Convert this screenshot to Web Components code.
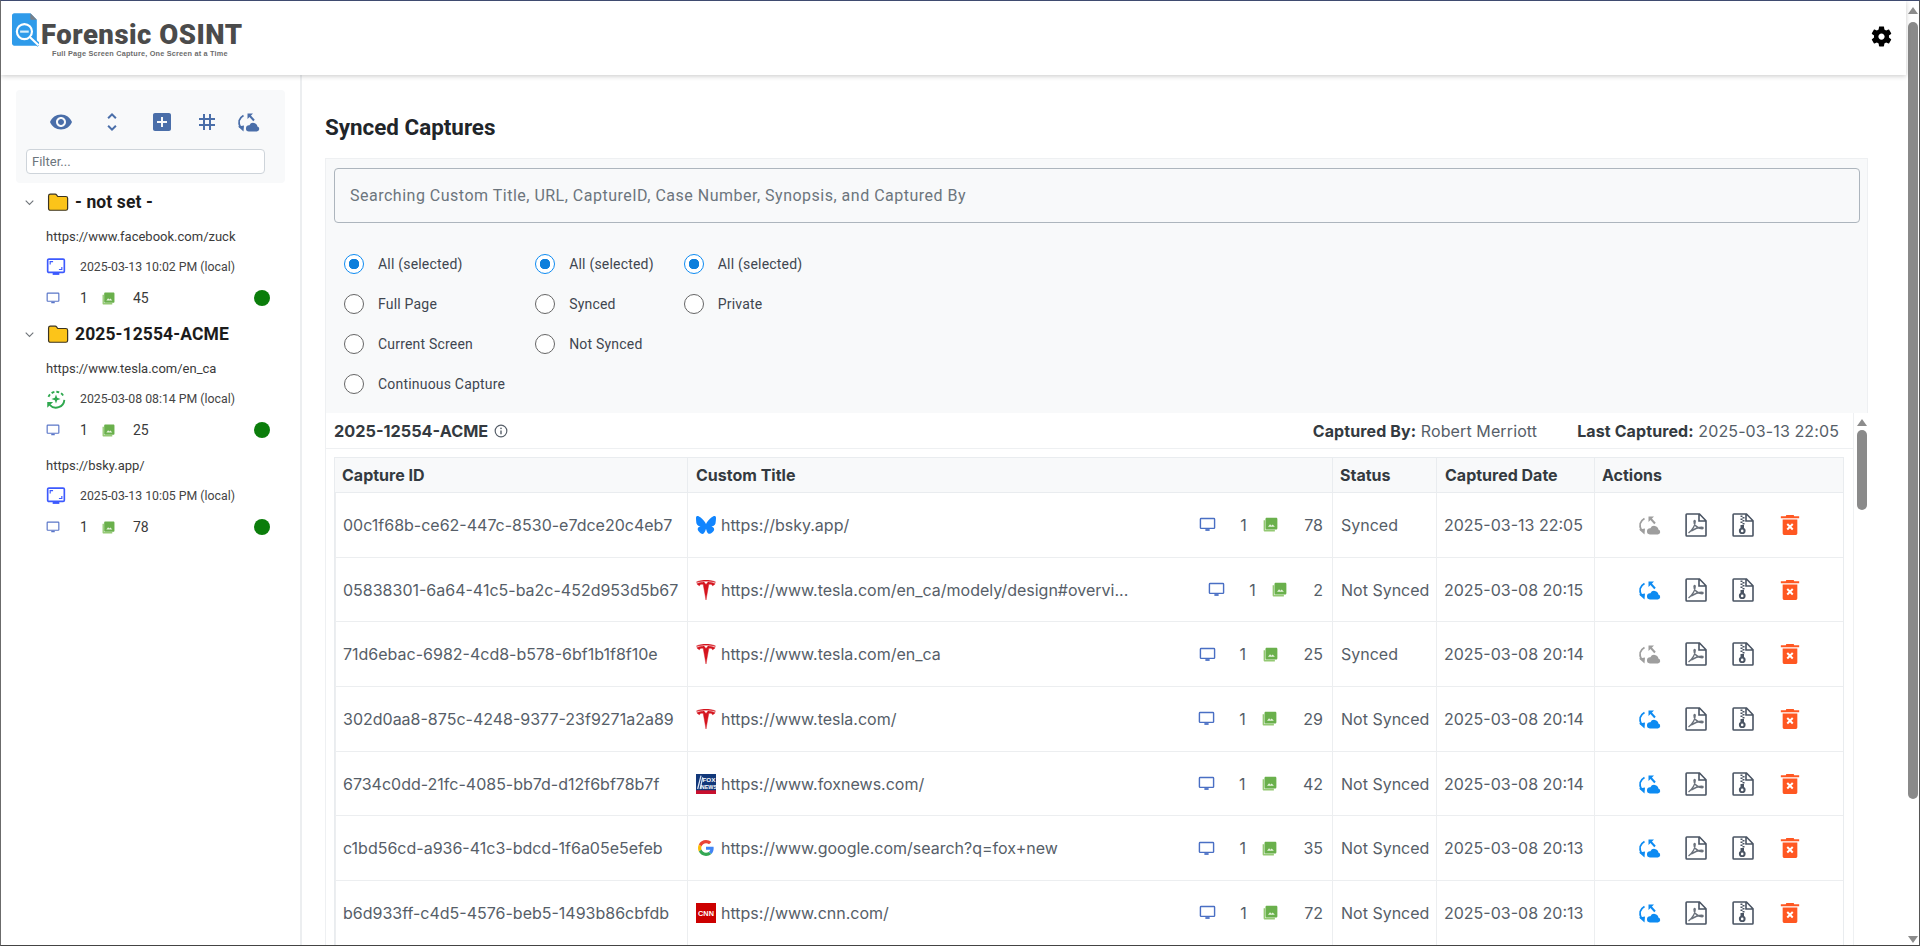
<!DOCTYPE html>
<html lang="en">
<head>
<meta charset="utf-8">
<title>Forensic OSINT</title>
<style>
    html, body { margin: 0; padding: 0; overflow: hidden; background: #fff; }
</style>
</head>
<body>
<app-shell>
    <app-header slot="header"></app-header>
    <side-panel slot="side">
        <tree-group label="- not set -">
            <tree-item url="https://www.facebook.com/zuck" date="2025-03-13 10:02 PM (local)" kind="page" shots="45"></tree-item>
        </tree-group>
        <tree-group label="2025-12554-ACME">
            <tree-item url="https://www.tesla.com/en_ca" date="2025-03-08 08:14 PM (local)" kind="loop" shots="25"></tree-item>
            <tree-item url="https://bsky.app/" date="2025-03-13 10:05 PM (local)" kind="page" shots="78"></tree-item>
        </tree-group>
    </side-panel>
    <captures-view slot="main">
        <capture-table>
            <capture-row cid="00c1f68b-ce62-447c-8530-e7dce20c4eb7" logo="bsky" url="https://bsky.app/" shots="78" status="Synced" date="2025-03-13 22:05"></capture-row>
            <capture-row cid="05838301-6a64-41c5-ba2c-452d953d5b67" logo="tesla" url="https://www.tesla.com/en_ca/modely/design#overvi..." shots="2" status="Not Synced" date="2025-03-08 20:15"></capture-row>
            <capture-row cid="71d6ebac-6982-4cd8-b578-6bf1b1f8f10e" logo="tesla" url="https://www.tesla.com/en_ca" shots="25" status="Synced" date="2025-03-08 20:14"></capture-row>
            <capture-row cid="302d0aa8-875c-4248-9377-23f9271a2a89" logo="tesla" url="https://www.tesla.com/" shots="29" status="Not Synced" date="2025-03-08 20:14"></capture-row>
            <capture-row cid="6734c0dd-21fc-4085-bb7d-d12f6bf78b7f" logo="fox" url="https://www.foxnews.com/" shots="42" status="Not Synced" date="2025-03-08 20:14"></capture-row>
            <capture-row cid="c1bd56cd-a936-41c3-bdcd-1f6a05e5efeb" logo="google" url="https://www.google.com/search?q=fox+new" shots="35" status="Not Synced" date="2025-03-08 20:13"></capture-row>
            <capture-row cid="b6d933ff-c4d5-4576-beb5-1493b86cbfdb" logo="cnn" url="https://www.cnn.com/" shots="72" status="Not Synced" date="2025-03-08 20:13"></capture-row>
        </capture-table>
    </captures-view>
</app-shell>

<script>
// all the svg bodies, viewBox 0 0 24 24 unless the markup says otherwise
const ICONS = {
    eye: `<path fill="currentColor" d="M12 4.5C7 4.5 2.73 7.61 1 12c1.73 4.39 6 7.5 11 7.5s9.27-3.11 11-7.5c-1.73-4.39-6-7.5-11-7.5zM12 17c-2.76 0-5-2.24-5-5s2.24-5 5-5 5 2.24 5 5-2.24 5-5 5zm0-8c-1.66 0-3 1.34-3 3s1.34 3 3 3 3-1.34 3-3-1.34-3-3-3z"/>`,
    unfold: `<path fill="currentColor" d="M12 5.83L15.17 9l1.41-1.41L12 3 7.41 7.59 8.83 9 12 5.83zm0 12.34L8.83 15l-1.41 1.41L12 21l4.59-4.59L15.17 15 12 18.17z"/>`,
    add: `<path fill="currentColor" d="M19 3H5c-1.11 0-2 .9-2 2v14c0 1.1.89 2 2 2h14c1.1 0 2-.9 2-2V5c0-1.1-.9-2-2-2zm-2 10h-4v4h-2v-4H7v-2h4V7h2v4h4v2z"/>`,
    hash: `<path fill="currentColor" d="M20 10V8h-4V4h-2v4h-4V4H8v4H4v2h4v4H4v2h4v4h2v-4h4v4h2v-4h4v-2h-4v-4h4zm-6 4h-4v-4h4v4z"/>`,
    sync: `<path fill="none" stroke="currentColor" stroke-width="1.900" d="M7.500 5.500C3 8 1.800 12.500 4.500 17.500"/><path fill="none" stroke="currentColor" stroke-width="2" d="M13.500 5.500l4.500 5"/>
        <path fill="currentColor" d="M2 16.500l6-1-.5 6zM11.500 3.500H17L11.500 9zM12.800 21.500h8a2.500 2.500 0 0 0 .6-4.900 4.200 4.200 0 0 0-8-1.300 3.100 3.100 0 0 0-.6 6.200z"/>`,
    gear: `<path fill="currentColor" d="M19.14 12.94c.04-.3.06-.61.06-.94 0-.32-.02-.64-.07-.94l2.03-1.58c.18-.14.23-.41.12-.61l-1.92-3.32c-.12-.22-.37-.29-.59-.22l-2.39.96c-.5-.38-1.03-.7-1.62-.94l-.36-2.54c-.04-.24-.24-.41-.48-.41h-3.84c-.24 0-.43.17-.47.41l-.36 2.54c-.59.24-1.13.57-1.62.94l-2.39-.96c-.22-.08-.47 0-.59.22L2.74 8.87c-.12.21-.08.47.12.61l2.03 1.58c-.05.3-.09.63-.09.94s.02.64.07.94l-2.03 1.58c-.18.14-.23.41-.12.61l1.92 3.32c.12.22.37.29.59.22l2.39-.96c.5.38 1.03.7 1.62.94l.36 2.54c.05.24.24.41.48.41h3.84c.24 0 .44-.17.47-.41l.36-2.54c.59-.24 1.13-.56 1.62-.94l2.39.96c.22.08.47 0 .59-.22l1.92-3.32c.12-.22.07-.47-.12-.61l-2.01-1.58zM12 15c-1.65 0-3-1.35-3-3s1.35-3 3-3 3 1.35 3 3-1.35 3-3 3z"/>`,
    info: `<circle cx="12" cy="12" r="10" fill="none" stroke="currentColor" stroke-width="2"/><circle cx="12" cy="7.6" r="1.4" fill="currentColor"/><path d="M12 11v6.5" stroke="currentColor" stroke-width="2.4"/>`,
    chevron: `<path fill="none" stroke="currentColor" stroke-width="2" d="M5 8.5l7 7 7-7"/>`,
    folder: `<path fill="#fcc419" stroke="#3b3320" stroke-width="1.3" d="M1.7 5.5c0-1.2.8-2 2-2h5.2c.8 0 1.2.3 1.7 1l1.1 1.5h8.8c1.3 0 2 .8 2 2v11c0 1.3-.7 2-2 2H3.700c-1.200 0-2-.7-2-2z"/>`,
    monitor: `<path fill="none" stroke="currentColor" stroke-width="2" d="M3 3.500h18c.6 0 1 .4 1 1v12c0 .6-.4 1-1 1H3c-.6 0-1-.4-1-1v-12c0-.6.4-1 1-1z"/><path fill="currentColor" d="M9 18.500h6v2.500H9z"/>`,
    gallery: `<path fill="#94c973" d="M1 5h2.500v15.500H19V23H3c-1.100 0-2-.9-2-2z"/><path fill="#6ab04c" d="M6 1h15c1.100 0 2 .9 2 2v15c0 1.100-.9 2-2 2H6c-1.100 0-2-.9-2-2V3c0-1.100.9-2 2-2z"/><path fill="#e8f3df" d="M8 15.500l3.300-4 2.200 2.500 2-2 3.500 3.500z"/>`,
    page: `<path fill="none" stroke="currentColor" stroke-width="2" d="M4 2.500h16.500c.8 0 1.500.7 1.500 1.500v13c0 .8-.7 1.500-1.500 1.500h-17c-.8 0-1.500-.7-1.500-1.500V4c0-.8.7-1.500 1.500-1.500z"/><path fill="currentColor" d="M8 19h8v2.500H8z"/><path fill="none" stroke="currentColor" stroke-width="1.400" d="M5 9V5.500h3.500M19 12v3h-3.500"/>`,
    loop: `<g fill="none" stroke="#2fa84f" stroke-width="2.200"><path stroke-dasharray="3.500 2.400" d="M3 9.500A10 10 0 0 1 21.500 9.500"/><path d="M22 13a10 10 0 0 1-17.500 6"/></g><path fill="#2fa84f" d="M1.500 22.500v-7h7zM12 6.500l1.400 4.100 4.100 1.400-4.100 1.400L12 17.500l-1.400-4.100L6.500 12l4.100-1.400z"/>`,
    pdf: `<path fill="none" stroke="currentColor" stroke-width="1.600" d="M2.800 1h12.700l6.500 6.700V22.300c0 .4-.3.700-.7.700H2.800c-.4 0-.7-.3-.7-.7V1.700c0-.4.3-.7.7-.7zM15 1.200V8h6.800"/><path fill="none" stroke="#6a717b" stroke-width="1.400" d="M4.500 20c3.600-2.800 6.500-7.800 6.700-11.500 0-1.200-1-1.400-1.200-.2-.4 3.400 3.200 7 8.200 7.400 1.200 0 1.100-1.400 0-1.400-3.300-.1-7.800 1.600-10.700 3.700"/>`,
    zip: `<path fill="none" stroke="currentColor" stroke-width="1.600" d="M2.800 1h12.700l6.500 6.700V22.300c0 .4-.3.700-.7.700H2.800c-.4 0-.7-.3-.7-.7V1.700c0-.4.3-.7.7-.7zM15 1.200V8h6.800"/><path fill="currentColor" d="M9.500 2.500h2v1.500h-2zM11.500 4h2v1.500h-2zM9.500 5.500h2V7h-2zM11.500 7h2v1.500h-2zM9.500 8.500h2V10h-2zM11.500 10h2v1.500h-2zM9.500 12h3.500v3c1 .6 1.600 1.500 1.600 2.700a3.350 3.350 0 0 1-6.700 0c0-1.200.6-2.100 1.600-2.700z"/><circle cx="11.200" cy="17.900" r="1.300" fill="#fff"/>`,
    trash: `<path fill="currentColor" d="M8 1h8l.6 1.500H22v2H2v-2h5.400zM4 6h16v15c0 1.100-.9 2-2 2H6c-1.100 0-2-.9-2-2z"/><path stroke="#fff" stroke-width="2.200" d="M9 11l6 6M15 11l-6 6"/>`,
    tesla: `<path fill="#d5141e" stroke="#d5141e" stroke-width=".5" d="M12 24l3.400-18.900c3.200 0 4.200.35 4.350 1.800 0 0 2.150-.8 3.230-2.440C18.750 2.500 14.500 2.350 14.500 2.350L12 5.400 9.500 2.350S5.250 2.500 1.020 4.460C2.100 6.100 4.250 6.900 4.250 6.900c.15-1.450 1.150-1.800 4.350-1.800z"/><path fill="#d5141e" stroke="#d5141e" stroke-width=".4" d="M12 1.450c3.400 0 7.050.05 11 1.500.36-.45.55-.7.55-.7C19.200.55 15.200.05 12 0 8.800.05 4.800.55.450 2.250c0 0 .2.250.55.700 3.950-1.450 7.600-1.500 11-1.500z"/>`,
    bsky: `<path fill="#1185fe" d="M12 10.800c-1.087-2.114-4.046-6.053-6.798-7.995C2.566.944 1.561 1.266.902 1.565.139 1.908 0 3.080 0 3.768c0 .69.378 5.650.624 6.479.815 2.736 3.713 3.660 6.383 3.364.136-.02.275-.039.415-.056-.138.022-.276.04-.415.056-3.912.58-7.387 2.005-2.830 7.078 5.013 5.190 6.870-1.113 7.823-4.308.953 3.195 2.050 9.271 7.733 4.308 4.267-4.308 1.172-6.498-2.740-7.078a8.741 8.741 0 0 1-.415-.056c.14.017.279.036.415.056 2.670.297 5.568-.628 6.383-3.364.246-.828.624-5.790.624-6.479 0-.688-.139-1.860-.902-2.203-.659-.299-1.664-.621-4.300 1.240C16.046 4.748 13.087 8.687 12 10.800z"/>`,
    google: `<g transform="translate(2.400 2.400) scale(.4)"><path fill="#EA4335" d="M24 9.500c3.540 0 6.710 1.220 9.210 3.600l6.850-6.850C35.900 2.380 30.470 0 24 0 14.620 0 6.510 5.380 2.560 13.220l7.980 6.190C12.430 13.720 17.740 9.500 24 9.500z"/><path fill="#4285F4" d="M46.980 24.550c0-1.570-.15-3.090-.38-4.550H24v9.020h12.940c-.58 2.960-2.260 5.480-4.780 7.180l7.730 6c4.510-4.180 7.090-10.360 7.090-17.650z"/><path fill="#FBBC05" d="M10.530 28.590c-.48-1.450-.76-2.990-.76-4.590s.27-3.140.76-4.590l-7.980-6.190C.92 16.460 0 20.120 0 24c0 3.880.92 7.540 2.560 10.780l7.970-6.190z"/><path fill="#34A853" d="M24 48c6.480 0 11.930-2.130 15.890-5.810l-7.730-6c-2.150 1.450-4.920 2.300-8.160 2.300-6.260 0-11.570-4.220-13.470-9.910l-7.980 6.190C6.510 42.620 14.620 48 24 48z"/></g>`,
    fox: `<rect width="24" height="24" fill="#12387a"/><rect y="19.500" width="24" height="4.500" fill="#c8102e"/><path stroke="#dfe7f5" stroke-width="1.500" d="M2 18L6 2M5 18L8 4"/><text x="15.500" y="10" font-family="Liberation Sans, sans-serif" font-size="7.500" font-weight="700" fill="#fff" text-anchor="middle">FOX</text><text x="15.500" y="18" font-family="Liberation Sans, sans-serif" font-size="6.500" font-weight="700" fill="#fff" text-anchor="middle">NEWS</text>`,
    cnn: `<rect width="24" height="24" fill="#cc0000"/><text x="12" y="15.500" font-family="Liberation Sans, sans-serif" font-size="9.500" font-weight="700" fill="#fff" text-anchor="middle" textLength="19" lengthAdjust="spacingAndGlyphs">CNN</text>`,
    logo: `<path fill="#2f9bea" d="M2 0h15l6 6v24H2c-1 0-2-.9-2-2V2C0 .9 1 0 2 0z"/><path fill="#77808a" d="M17 0l6 6h-6z"/><circle cx="11.500" cy="17" r="7" fill="#2f9bea" stroke="#fff" stroke-width="2"/><path stroke="#d7eefc" stroke-width="2" d="M7.500 17h8"/><path stroke="#2f9bea" stroke-width="4" d="M17 22.500l8 7"/><path stroke="#fff" stroke-width="2" d="M16.500 22l8 7.500"/>`
};

class UiIcon extends HTMLElement {
    connectedCallback() {
        this.attachShadow({ mode: "open" });
        const name = this.getAttribute("name");
        const size = this.getAttribute("size") ?? "24";
        const h = this.getAttribute("h") ?? size;
        const box = this.getAttribute("box") ?? "0 0 24 24";
        this.shadowRoot.innerHTML = `
            <style>
                :host { display: inline-flex; flex: none; line-height: 0; }
            </style>
            <svg width="${size}" height="${h}" viewBox="${box}">${ICONS[name] ?? ""}</svg>
        `;
    }
}

class AppShell extends HTMLElement {
    connectedCallback() {
        this.attachShadow({ mode: "open" });
        this.shadowRoot.innerHTML = `
            <style>
                :host {
                    display: flex;
                    box-sizing: border-box;
                    width: 1920px;
                    height: 946px;
                    overflow: hidden;
                    border-top: 1px solid #3f4b70;
                    border-left: 1px solid #6b6b6b;
                    border-right: 1px solid #555;
                    border-bottom: 1px solid #444;
                    font-family: Roboto, "Liberation Sans", sans-serif;
                    background: #fff;
                }
                .page { flex: 1; min-width: 0; display: flex; flex-direction: column; }
                .below { flex: 1; min-height: 0; display: flex; }
            </style>
            <div class="page">
                <slot name="header"></slot>
                <div class="below">
                    <slot name="side"></slot>
                    <slot name="main"></slot>
                </div>
            </div>
            <fake-scrollbar wide thumb-top="8" thumb-height="777"></fake-scrollbar>
        `;
    }
}

class FakeScrollbar extends HTMLElement {
    connectedCallback() {
        this.attachShadow({ mode: "open" });
        const top = this.getAttribute("thumb-top");
        const height = this.getAttribute("thumb-height");
        this.shadowRoot.innerHTML = `
            <style>
                :host {
                    display: flex;
                    flex-direction: column;
                    align-items: center;
                    flex: none;
                    width: 13px;
                    padding-top: 5px;
                    box-sizing: border-box;
                }
                :host([wide]) { background: #fff; padding-top: 6px; }
                .up { width: 0; height: 0; border: 5.5px solid transparent; border-top: 0; border-bottom: 7px solid #8c8c8c; }
                .down { display: none; width: 0; height: 0; border: 5.5px solid transparent; border-bottom: 0; border-top: 7px solid #8c8c8c; margin-top: auto; margin-bottom: 2px; }
                :host([wide]) .down { display: block; }
                .thumb { width: 10px; height: ${height}px; margin-top: ${top}px; background: #8a8a8a; border-radius: 5px; flex: none; }
            </style>
            <div class="up"></div>
            <div class="thumb"></div>
            <div class="down"></div>
        `;
    }
}

class AppHeader extends HTMLElement {
    connectedCallback() {
        this.attachShadow({ mode: "open" });
        this.shadowRoot.innerHTML = `
            <style>
                :host {
                    display: flex;
                    align-items: flex-start;
                    justify-content: space-between;
                    flex: none;
                    height: 74px;
                    box-sizing: border-box;
                    background: #fff;
                    box-shadow: 0 1px 5px rgba(0, 0, 0, .22);
                    position: relative;
                    z-index: 2;
                    padding: 12px 12px 0 11px;
                }
                .brand { display: flex; flex-direction: column; }
                .top { display: flex; align-items: flex-start; }
                .name {
                    font: 900 27.500px/30px Roboto, sans-serif;
                    color: #4b4b4b;
                    letter-spacing: .5px;
                    margin: 7px 0 0 2px;
                }
                .tag {
                    font: 700 7.300px/10px "Liberation Sans", sans-serif;
                    color: #6d6d6d;
                    margin: -1px 0 0 40px;
                    letter-spacing: .2px;
                }
                .gear { color: #000; margin-top: 11px; }
            </style>
            <div class="brand">
                <div class="top">
                    <ui-icon name="logo" size="27" h="34" box="0 0 25 31"></ui-icon>
                    <span class="name">Forensic OSINT</span>
                </div>
                <span class="tag">Full Page Screen Capture, One Screen at a Time</span>
            </div>
            <ui-icon class="gear" name="gear" size="25"></ui-icon>
        `;
    }
}

class SidePanel extends HTMLElement {
    connectedCallback() {
        this.attachShadow({ mode: "open" });
        this.shadowRoot.innerHTML = `
            <style>
                :host {
                    display: block;
                    flex: none;
                    width: 301px;
                    box-sizing: border-box;
                    border-right: 2px solid #eceef0;
                    padding: 15px 15px 0 15px;
                    font-family: Roboto, sans-serif;
                }
                .tools { background: #f8f9fa; border-radius: 4px; padding: 20px 20px 9px 10px; height: 93px; box-sizing: border-box; }
                .icons { display: flex; color: #4a6ea9; padding-left: 23px; }
                .icons ui-icon:nth-child(2) { margin-left: 27px; }
                .icons ui-icon:nth-child(3) { margin-left: 26px; }
                .icons ui-icon:nth-child(4) { margin-left: 21px; }
                .icons ui-icon:nth-child(5) { margin-left: 17px; }
                .filter {
                    margin-top: 15px;
                    height: 25px;
                    box-sizing: border-box;
                    background: #fff;
                    border: 1px solid #ced4da;
                    border-radius: 4px;
                    padding: 0 5px;
                    font-size: 13px;
                    line-height: 23px;
                    color: #6c757d;
                }
            </style>
            <div class="tools">
                <div class="icons">
                    <ui-icon name="eye"></ui-icon>
                    <ui-icon name="unfold"></ui-icon>
                    <ui-icon name="add"></ui-icon>
                    <ui-icon name="hash"></ui-icon>
                    <ui-icon name="sync"></ui-icon>
                </div>
                <div class="filter">Filter...</div>
            </div>
            <slot></slot>
        `;
    }
}

class TreeGroup extends HTMLElement {
    connectedCallback() {
        this.attachShadow({ mode: "open" });
        this.shadowRoot.innerHTML = `
            <style>
                :host { display: block; margin-top: 4px; }
                :host(:not(:first-of-type)) { margin-top: 5px; }
                .head { display: flex; align-items: center; height: 30px; }
                .chev { color: #70757a; margin-left: 7px; }
                .folder { margin-left: 11px; }
                .label { font: 700 17.500px/30px Roboto, sans-serif; color: #1c1c1c; margin-left: 6px; letter-spacing: .1px; }
            </style>
            <div class="head">
                <ui-icon class="chev" name="chevron" size="13"></ui-icon>
                <ui-icon class="folder" name="folder" size="22" h="22"></ui-icon>
                <span class="label">${this.getAttribute("label")}</span>
            </div>
            <slot></slot>
        `;
    }
}

class TreeItem extends HTMLElement {
    connectedCallback() {
        this.attachShadow({ mode: "open" });
        const kind = this.getAttribute("kind");
        this.shadowRoot.innerHTML = `
            <style>
                :host { display: block; margin: 5px 0 0 30px; height: 92px; font-family: Roboto, sans-serif; color: #3a3a3a; }
                .url { font-size: 13px; line-height: 30px; height: 30px; }
                .date { display: flex; align-items: center; height: 30px; font-size: 12.300px; color: #444; }
                .date span { margin-left: 14px; }
                .date ui-icon { color: #3d5afe; }
                .count { display: flex; align-items: center; height: 32px; font-size: 14px; }
                .count .mon { color: #5a76c8; }
                .one { margin-left: 20px; width: 22px; }
                .num { margin-left: 18px; }
                .dot { width: 16px; height: 16px; border-radius: 50%; background: #0b7d0b; margin-left: auto; margin-right: 15px; }
            </style>
            <div class="url">${this.getAttribute("url")}</div>
            <div class="date"><ui-icon name="${kind}" size="20"></ui-icon><span>${this.getAttribute("date")}</span></div>
            <div class="count">
                <ui-icon class="mon" name="monitor" size="14"></ui-icon>
                <span class="one">1</span>
                <ui-icon name="gallery" size="13"></ui-icon>
                <span class="num">${this.getAttribute("shots")}</span>
                <span class="dot"></span>
            </div>
        `;
    }
}

class RadioOption extends HTMLElement {
    connectedCallback() {
        this.attachShadow({ mode: "open" });
        this.shadowRoot.innerHTML = `
            <style>
                :host { display: flex; align-items: center; height: 40px; font: 14px Roboto, sans-serif; letter-spacing: .2px; color: #3f4650; }
                .ring { width: 20px; height: 20px; box-sizing: border-box; border-radius: 50%; border: 1.800px solid #666; margin-right: 14px; background: #fff; flex: none; }
                :host([checked]) .ring { border-color: #0d8bf2; background: radial-gradient(circle, #0d7fdc 0 5px, #fff 5.500px); }
            </style>
            <span class="ring"></span><slot></slot>
        `;
    }
}

class CapturesView extends HTMLElement {
    connectedCallback() {
        this.attachShadow({ mode: "open" });
        this.shadowRoot.innerHTML = `
            <style>
                :host { display: flex; flex-direction: column; flex: 1; min-width: 0; padding: 38px 38px 0 23px; font-family: Roboto, sans-serif; overflow: hidden; }
                h2 { font: 700 22.400px/28px Roboto, "Liberation Sans", sans-serif; color: #212529; margin: 0 0 17px; }
                .filters { background: #f8f9fa; border: 1px solid #eef0f2; border-bottom: 0; padding: 9px 7px 9px 8px; flex: none; height: 255px; box-sizing: border-box; }
                .search {
                    height: 55px;
                    box-sizing: border-box;
                    border: 1px solid #adb5bd;
                    border-radius: 4px;
                    padding-left: 15px;
                    font: 16px/53px Roboto, sans-serif;
                    letter-spacing: .5px;
                    color: #6c757d;
                    background: #f8f9fa;
                }
                .radios { display: flex; gap: 30px; padding: 21px 0 0 10px; }
                .lower { flex: 1; min-height: 0; display: flex; }
                .scroller { flex: 1; min-width: 0; border-left: 1px solid #eef0f2; border-right: 1px solid #eef0f2; }
                fake-scrollbar { width: 14px; padding-left: 1px; padding-top: 6px; }
            </style>
            <h2>Synced Captures</h2>
            <div class="filters">
                <div class="search">Searching Custom Title, URL, CaptureID, Case Number, Synopsis, and Captured By</div>
                <div class="radios">
                    <div>
                        <radio-option checked>All (selected)</radio-option>
                        <radio-option>Full Page</radio-option>
                        <radio-option>Current Screen</radio-option>
                        <radio-option>Continuous Capture</radio-option>
                    </div>
                    <div>
                        <radio-option checked>All (selected)</radio-option>
                        <radio-option>Synced</radio-option>
                        <radio-option>Not Synced</radio-option>
                    </div>
                    <div>
                        <radio-option checked>All (selected)</radio-option>
                        <radio-option>Private</radio-option>
                    </div>
                </div>
            </div>
            <div class="lower">
                <div class="scroller"><slot></slot></div>
                <fake-scrollbar thumb-top="4" thumb-height="80"></fake-scrollbar>
            </div>
        `;
    }
}

class CaptureTable extends HTMLElement {
    connectedCallback() {
        this.attachShadow({ mode: "open" });
        this.shadowRoot.innerHTML = `
            <style>
                :host {
                    display: block;
                    --cols: 352px 645px 104px 158px 248px;
                    font-family: Inter, Roboto, sans-serif;
                    color: #565e68;
                }
                .bar {
                    display: flex;
                    align-items: center;
                    height: 36px;
                    box-sizing: border-box;
                    border-bottom: 1px solid #eef0f2;
                    padding: 0 14px 0 8px;
                    font-size: 16px;
                }
                .case { font-weight: 700; font-size: 16.300px; color: #343a40; }
                .bar ui-icon { color: #565e68; margin-left: 6px; }
                .meta { margin-left: auto; letter-spacing: .11px; }
                .meta + .meta { margin-left: 40px; }
                .meta b { color: #343a40; }
                .table { margin: 8px 9px 0 8px; border: 1px solid #e9ecef; border-bottom: 0; }
                .head {
                    display: grid;
                    grid-template-columns: var(--cols);
                    height: 35px;
                    box-sizing: border-box;
                    background: #f8f9fa;
                    border-bottom: 1px solid #e9ecef;
                    font-weight: 700;
                    font-size: 16px;
                    color: #343a40;
                }
                .head div { padding-left: 7px; line-height: 34px; border-left: 1px solid #e9ecef; }
                .head div:first-child { border-left: 0; }
                .head div:nth-child(2), .head div:nth-child(4) { padding-left: 8px; }
            </style>
            <div class="bar">
                <span class="case">2025-12554-ACME</span>
                <ui-icon name="info" size="14"></ui-icon>
                <span class="meta"><b>Captured By:</b> Robert Merriott</span>
                <span class="meta"><b>Last Captured:</b> 2025-03-13 22:05</span>
            </div>
            <div class="table">
                <div class="head">
                    <div>Capture ID</div>
                    <div>Custom Title</div>
                    <div>Status</div>
                    <div>Captured Date</div>
                    <div>Actions</div>
                </div>
                <slot></slot>
            </div>
        `;
    }
}

class CaptureRow extends HTMLElement {
    connectedCallback() {
        this.attachShadow({ mode: "open" });
        const synced = this.getAttribute("status") === "Synced";
        this.shadowRoot.innerHTML = `
            <style>
                :host {
                    display: grid;
                    grid-template-columns: var(--cols);
                    height: 64.700px;
                    box-sizing: border-box;
                    border-bottom: 1px solid #eceef0;
                    font-size: 16px;
                }
                .cell { display: flex; align-items: center; padding-left: 7px; border-left: 1px solid #eceef0; white-space: nowrap; min-width: 0; }
                .cell:first-child { border-left: 0; }
                .cell:nth-child(4) { padding-left: 8px; }
                .logo { margin: 0 5px 0 1px; }
                .shots { margin-left: auto; display: flex; align-items: center; padding-right: 9px; }
                .mon { color: #4a6fc4; }
                .one { margin-left: 24px; width: 7px; }
                .gal { margin-left: 16px; }
                .num { margin-left: 26px; }
                .actions { padding-left: 42px; gap: 23px; }
                .sync { color: ${synced ? "#9e9e9e" : "#0d8bf2"}; }
                .doc { color: #4a5463; }
                .del { color: #ff5722; }
            </style>
            <div class="cell">${this.getAttribute("cid")}</div>
            <div class="cell">
                <ui-icon class="logo" name="${this.getAttribute("logo")}" size="20"></ui-icon>
                <span>${this.getAttribute("url")}</span>
                <span class="shots">
                    <ui-icon class="mon" name="monitor" size="17"></ui-icon>
                    <span class="one">1</span>
                    <ui-icon class="gal" name="gallery" size="15"></ui-icon>
                    <span class="num">${this.getAttribute("shots")}</span>
                </span>
            </div>
            <div class="cell">${this.getAttribute("status")}</div>
            <div class="cell">${this.getAttribute("date")}</div>
            <div class="cell actions">
                <ui-icon class="sync" name="sync"></ui-icon>
                <ui-icon class="doc" name="pdf"></ui-icon>
                <ui-icon class="doc" name="zip"></ui-icon>
                <ui-icon class="del" name="trash" size="24" h="22"></ui-icon>
            </div>
        `;
    }
}

customElements.define("ui-icon", UiIcon);
customElements.define("app-shell", AppShell);
customElements.define("fake-scrollbar", FakeScrollbar);
customElements.define("app-header", AppHeader);
customElements.define("side-panel", SidePanel);
customElements.define("tree-group", TreeGroup);
customElements.define("tree-item", TreeItem);
customElements.define("radio-option", RadioOption);
customElements.define("captures-view", CapturesView);
customElements.define("capture-table", CaptureTable);
customElements.define("capture-row", CaptureRow);
</script>
</body>
</html>
